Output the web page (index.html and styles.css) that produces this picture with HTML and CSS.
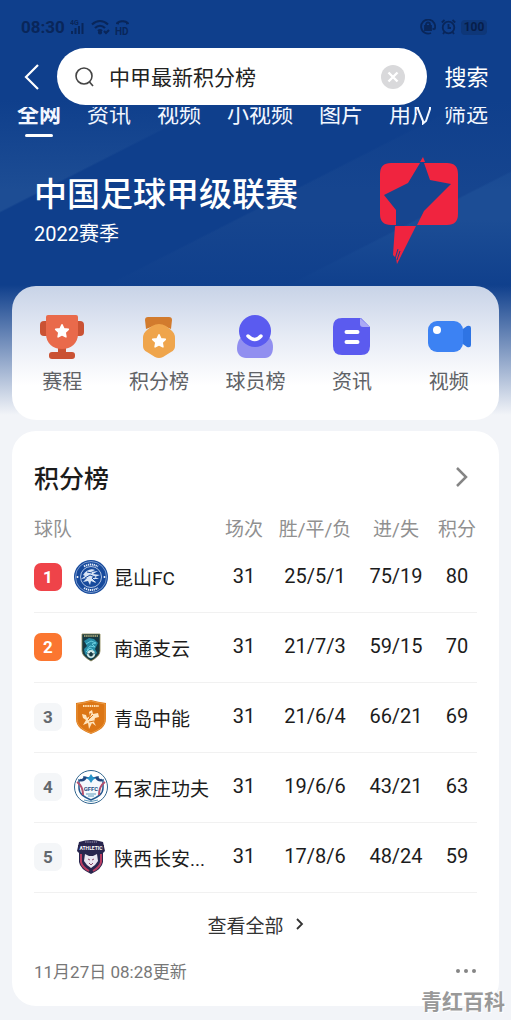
FILE: index.html
```html
<!DOCTYPE html>
<html lang="zh-CN">
<head>
    <meta charset="UTF-8">
    <meta name="viewport" content="width=device-width, initial-scale=1.0">
    <title>中甲最新积分榜</title>
    <link rel="stylesheet" href="styles.css">
</head>
<body>
    <svg class="defs" aria-hidden="true">
        <symbol id="star" viewBox="0 0 16 16">
            <path d="M8 1.800l1.900 4 4.400.6-3.200 3 .8 4.400L8 11.700l-3.900 2.100.8-4.400-3.200-3 4.400-.6z" fill="#fff" stroke="#fff" stroke-width="1.600" stroke-linejoin="round"/>
        </symbol>
    </svg>
    <div class="page">
        <header>
            <div class="status">
                <span class="time">08:30</span>
                <svg width="16" height="16" viewBox="0 0 16 16" fill="currentColor">
                    <text x="0" y="6" font-size="7" font-weight="700">4G</text>
                    <path d="M1 12h2v3H1zM4.500 9h2v6h-2zM8 7h2v8H8zM11.500 4h2v11h-2z"/>
                </svg>
                <svg width="19" height="16" viewBox="0 0 19 16" fill="none" stroke="currentColor" stroke-width="2.200">
                    <path d="M1 5.500C6 1 12 1 17 5.500M4 9c3-3 7-3 10 0M7 12c1.500-1.300 2.500-1.300 4 0"/>
                    <circle cx="9" cy="13.500" r="1"/>
                    <path d="M13 12l2 2 3-3"/>
                </svg>
                <svg width="16" height="17" viewBox="0 0 16 17" fill="currentColor">
                    <path d="M1 5c0-5 13-5 13 0l-3 .5V4C9 3 6 3 4 4v1.500z"/>
                    <text x="0" y="16" font-size="10" font-weight="700">HD</text>
                </svg>
                <div class="status-right">
                    <svg width="16" height="16" viewBox="0 0 16 16" fill="none" stroke="currentColor" stroke-width="1.800">
                        <path d="M11 14a7 7 0 1 1 3.500-3.500M14.500 10.500l-2-1"/>
                        <path d="M5 7h6v4H5z" fill="currentColor"/>
                        <path d="M6 7V5.500a2 2 0 0 1 4 0V7"/>
                    </svg>
                    <svg width="15" height="16" viewBox="0 0 15 16" fill="none" stroke="currentColor" stroke-width="1.800">
                        <circle cx="7.500" cy="8.500" r="5.800"/>
                        <path d="M7.500 5v4H10M.8 3.500L3.500 1M14.200 3.500L11.500 1M3.500 13L2 15M11.500 13l1.500 2"/>
                    </svg>
                    <span class="battery">100</span>
                </div>
            </div>
            <form class="search" onsubmit="return false">
                <button type="button" class="back" aria-label="返回">
                    <svg width="16" height="28" viewBox="0 0 16 28" fill="none" stroke="#fff" stroke-width="2.200"><path d="M14 2L2 14l12 12"/></svg>
                </button>
                <div class="search-box">
                    <svg width="20" height="22" viewBox="0 0 20 22" fill="none" stroke="#444" stroke-width="1.600"><circle cx="9" cy="10" r="8"/><path d="M14.500 16l3.500 4"/></svg>
                    <input type="text" aria-label="搜索内容" value="中甲最新积分榜">
                    <button type="reset" class="clear" aria-label="清除">
                        <svg width="24" height="24" viewBox="0 0 24 24"><circle cx="12" cy="12" r="12" fill="#d9d9db"/><path d="M7.500 7.500l9 9M16.500 7.500l-9 9" stroke="#fff" stroke-width="2.400"/></svg>
                    </button>
                </div>
                <button type="submit" class="submit">搜索</button>
            </form>
        </header>

        <nav class="tabs">
            <div class="tab-list">
                <a href="#" class="active">全网</a>
                <a href="#">资讯</a>
                <a href="#">视频</a>
                <a href="#">小视频</a>
                <a href="#">图片</a>
                <a href="#">用户</a>
            </div>
            <a href="#" class="filter">
                <svg width="14" height="22" viewBox="0 0 14 22" fill="none" stroke="#f2f7ff" stroke-width="2"><path d="M1 2h12v4L9 18l-3 2.500V18L1 6z"/></svg>
                筛选
            </a>
        </nav>

        <section class="hero">
            <div>
                <h1>中国足球甲级联赛</h1>
                <p>2022赛季</p>
            </div>
            <svg width="80" height="108" viewBox="0 0 80 108" fill="#f0243f">
                <path fill-rule="evenodd" d="M12 6H68Q79 6 79 17V57Q79 68 68 68H12Q1 68 1 57V17Q1 6 12 6ZM41 6L29 26L5 38L17 53L17 68H38L45 54L72 27L51 23L45 6Z"/>
                <path d="M41 5L44 0L46 5Z"/>
                <path d="M16 69H37L18 107L17 101L14 98Z"/>
                <path d="M19 92L16 102M21 94L18 103" stroke="#17468f" stroke-width="1"/>
            </svg>
        </section>

        <nav class="card shortcuts">
            <a href="#">
                <svg width="44" height="44" viewBox="0 0 44 44">
                    <rect x="0" y="6" width="14" height="15" rx="4" fill="#ca5234"/>
                    <rect x="30" y="6" width="14" height="15" rx="4" fill="#ca5234"/>
                    <path d="M18 31h8v8h-8z" fill="#ca5234"/>
                    <path d="M6 2q0-2 2-2h28q2 0 2 2v17c0 9-7 15-16 15S6 28 6 19z" fill="#e96a4b"/>
                    <rect x="9" y="37" width="26" height="7" rx="3" fill="#ca5234"/>
                    <use href="#star" x="14" y="8" width="16" height="16"/>
                </svg>
                赛程
            </a>
            <a href="#">
                <svg width="44" height="44" viewBox="0 0 44 44">
                    <path d="M8 5q0-3 3-3h21q3 0 3 3l-1 9q-12-7-25 0z" fill="#d27b2d"/>
                    <path d="M15 11q7-4 14 0l5 4q4 3 4 8v8q0 4-4 6l-8 5q-4 2-8 0l-8-5q-4-2-4-6v-8q0-5 4-8z" fill="#efa54c"/>
                    <use href="#star" x="14" y="18" width="16" height="16"/>
                </svg>
                积分榜
            </a>
            <a href="#">
                <svg width="44" height="44" viewBox="0 0 44 44">
                    <path d="M10 21h24c4 2 6 6 6 11 0 7-3 11-8 11H13c-5 0-9-4-9-9 0-6 2-11 6-13z" fill="#918ff0"/>
                    <circle cx="22" cy="16" r="16" fill="#5a5bf0"/>
                    <path d="M15 21q7 7 13 0" fill="none" stroke="#fff" stroke-width="3.500" stroke-linecap="round"/>
                </svg>
                球员榜
            </a>
            <a href="#">
                <svg width="44" height="44" viewBox="0 0 44 44">
                    <path d="M12 3h19l9 9v19q0 9-9 9H12q-9 0-9-9V12q0-9 9-9z" fill="#5b5bef"/>
                    <path d="M30 3l10 9h-7q-3 0-3-3z" fill="#aaa9f5"/>
                    <path d="M16.500 17h11M16.500 27h11" stroke="#fff" stroke-width="4" stroke-linecap="round"/>
                </svg>
                资讯
            </a>
            <a href="#">
                <svg width="44" height="44" viewBox="0 0 44 44">
                    <path d="M33 16l7-5q4-1 4 2v17q0 3-4 2l-7-5z" fill="#2e74e4"/>
                    <rect x="1" y="6" width="35" height="31" rx="9" fill="#3c82f3"/>
                    <circle cx="10" cy="15" r="4" fill="#fff"/>
                </svg>
                视频
            </a>
        </nav>

        <section class="card standings">
            <a href="#" class="card-title">
                <h2>积分榜</h2>
                <svg width="14" height="22" viewBox="0 0 14 22" fill="none" stroke="#858585" stroke-width="2.500"><path d="M2 2l9 9-9 9"/></svg>
            </a>
            <table>
                <thead>
                    <tr>
                        <th class="team-col">球队</th>
                        <th class="played">场次</th>
                        <th class="record">胜/平/负</th>
                        <th class="goals">进/失</th>
                        <th class="points">积分</th>
                    </tr>
                </thead>
                <tbody>
                    <tr>
                        <td>
                            <div class="team">
                                <span class="rank first">1</span>
                                <svg width="34" height="34" viewBox="0 0 34 34">
                                    <circle cx="17" cy="17" r="17" fill="#174a9c"/>
                                    <circle cx="17" cy="17" r="15.500" fill="none" stroke="#b9cdec" stroke-width=".6"/>
                                    <circle cx="17" cy="17" r="10.500" fill="#174a9c" stroke="#d5e1f3" stroke-width=".8"/>
                                    <path d="M10 6.500q7-4 14 0M10 28q7 4 14 0" fill="none" stroke="#e5eefb" stroke-width="2" stroke-dasharray="1.300 .7"/>
                                    <path d="M9 15c3-5 8-7 12-5l-4 2 7-1-5 3 7 1-5 2 4 2-5 0 2 4-5-2-1 4-2-4-5 1 4-4-6 1 4-3z" fill="#d9e5f5"/>
                                    <path d="M11 18l5-3 5 2-3 1 3 3M13 12l5 1" fill="none" stroke="#174a9c"/>
                                    <circle cx="3.500" cy="17" r="1" fill="#fff"/>
                                    <circle cx="30.500" cy="17" r="1" fill="#fff"/>
                                </svg>
                                昆山FC
                            </div>
                        </td>
                        <td>31</td>
                        <td>25/5/1</td>
                        <td>75/19</td>
                        <td>80</td>
                    </tr>
                    <tr>
                        <td>
                            <div class="team">
                                <span class="rank second">2</span>
                                <svg width="34" height="34" viewBox="0 0 34 34">
                                    <path d="M8 4h18v17q0 5-9 10-9-5-9-10z" fill="#173943" stroke="#8b8554" stroke-width=".8"/>
                                    <path d="M10 6h14" stroke="#c0b77e" stroke-width="1.500" stroke-dasharray="1.500 .6"/>
                                    <path d="M10 11l5-3 5 1 4 4-3 6 2 4-6 6-6-5-1-5 3-3z" fill="#278ca5"/>
                                    <path d="M12 14l5-3 5 2-4 1 3 3-5-1-3 4M12 22l4-4 3 2" fill="none" stroke="#69cede"/>
                                    <circle cx="17" cy="24" r="4" fill="#cde8e7"/>
                                    <path d="M17 22l2 2-1 2h-2l-1-2zM13 23l2 1M21 23l-2 1" fill="#173943" stroke="#173943" stroke-width=".6"/>
                                </svg>
                                南通支云
                            </div>
                        </td>
                        <td>31</td>
                        <td>21/7/3</td>
                        <td>59/15</td>
                        <td>70</td>
                    </tr>
                    <tr>
                        <td>
                            <div class="team">
                                <span class="rank">3</span>
                                <svg width="34" height="34" viewBox="0 0 34 34">
                                    <path d="M2 3q8-1 15-3 7 2 15 3v16c0 8-7 12-15 15C9 31 2 27 2 19z" fill="#dc7615"/>
                                    <path d="M3 4q7-1 14-3 7 2 14 3v15c0 7-6 11-14 14C9 30 3 26 3 19z" fill="none" stroke="#f0a752" stroke-width=".7"/>
                                    <path d="M9 6h16" stroke="#ffe1b5" stroke-width="2" stroke-dasharray="1.500 .7"/>
                                    <path d="M15 12l3-2 1 4 5-1 1 4-4 1-1 4 2 4-4-3-3 6-1-6-5 2 3-5-3-2-1-4 4 1 1 3 3-2z" fill="#ffe4bd"/>
                                    <path d="M14 20l5-5M15 22l5-1M17 13l-2 6" stroke="#dc7615"/>
                                </svg>
                                青岛中能
                            </div>
                        </td>
                        <td>31</td>
                        <td>21/6/4</td>
                        <td>66/21</td>
                        <td>69</td>
                    </tr>
                    <tr>
                        <td>
                            <div class="team">
                                <span class="rank">4</span>
                                <svg width="34" height="34" viewBox="0 0 34 34">
                                    <circle cx="17" cy="17" r="16.500" fill="#fff" stroke="#31658e"/>
                                    <path d="M5 10q5 1 5-3 7 2 14 0 0 4 5 3v8c0 6-5 9-12 12-7-3-12-6-12-12z" fill="#f5f9fd" stroke="#24588f" stroke-width="1.500"/>
                                    <path d="M3 12q6 4 6 13M31 12q-6 4-6 13" fill="none" stroke="#b4506e" stroke-width="2"/>
                                    <path d="M6 10q4 1 6-3M28 10q-4 1-6-3" fill="none" stroke="#22467f" stroke-width="2.500"/>
                                    <path d="M17 4l2 3 3 1-3 2-2 3-2-3-3-2 3-1z" fill="#2794c9"/>
                                    <text x="17" y="21" text-anchor="middle" font-size="6" font-weight="700" fill="#244e84">GFFC</text>
                                    <path d="M12 24h10M14 26h6M10 30q7 3 14 0" fill="none" stroke="#5f9abd"/>
                                </svg>
                                石家庄功夫
                            </div>
                        </td>
                        <td>31</td>
                        <td>19/6/6</td>
                        <td>43/21</td>
                        <td>63</td>
                    </tr>
                    <tr>
                        <td>
                            <div class="team">
                                <span class="rank">5</span>
                                <svg width="34" height="34" viewBox="0 0 34 34">
                                    <path d="M5 2q12-4 24 0l2 9-2 2v9q-1 7-12 12Q6 29 5 22v-9l-2-2z" fill="#29264e"/>
                                    <path d="M7 14v8q1 5 8 9M27 14v8q-1 5-8 9" fill="none" stroke="#b83d61" stroke-width="2"/>
                                    <path d="M4 5h26v5H4z" fill="#29264e"/>
                                    <path d="M11 2h12" stroke="#a09bb7" stroke-dasharray="1.500 .7"/>
                                    <text x="17" y="10" text-anchor="middle" font-size="5" font-weight="700" fill="#fff">ATHLETIC</text>
                                    <path d="M11 14l4 2h4l4-2 1 7-3 4-4 3-4-3-3-4z" fill="#eae7f1"/>
                                    <path d="M14 19l2 1M20 19l-2 1M15 23l2 2 2-2" fill="none" stroke="#8c4968"/>
                                </svg>
                                陕西长安...
                            </div>
                        </td>
                        <td>31</td>
                        <td>17/8/6</td>
                        <td>48/24</td>
                        <td>59</td>
                    </tr>
                </tbody>
            </table>
            <a href="#" class="more">
                查看全部
                <svg width="8" height="12" viewBox="0 0 8 12" fill="none" stroke="#333" stroke-width="1.800"><path d="M1 1l5 5-5 5"/></svg>
            </a>
            <div class="card-foot">
                <span>11月27日 08:28更新</span>
                <button type="button" aria-label="更多">
                    <svg width="22" height="6" viewBox="0 0 22 6" fill="#858585"><circle cx="3" cy="3" r="2"/><circle cx="11" cy="3" r="2"/><circle cx="19" cy="3" r="2"/></svg>
                </button>
            </div>
        </section>
        <div class="watermark">青红百科</div>
    </div>
</body>
</html>
```
FILE: styles.css
```css
* {
    box-sizing: border-box;
}
body {
    margin: 0;
    background-color: #f2f4f8;
    font-family: Roboto, "Noto Sans CJK SC", sans-serif;
    color: #1c1c1c;
}
a {
    color: inherit;
    text-decoration: none;
}
button {
    padding: 0;
    border: none;
    background: none;
    font-family: inherit;
    cursor: pointer;
}
svg {
    flex-shrink: 0;
}
h1, h2, p {
    margin: 0;
}
.defs {
    position: absolute;
    width: 0;
    height: 0;
}
/* blue stripes on top, fading into the grey page */
.page {
    position: relative;
    padding-bottom: 14px;
    background-image:
        linear-gradient(#0f3f8c 100px, rgba(15, 63, 140, 0) 190px),
        linear-gradient(rgba(242, 244, 248, 0) 285px, #f2f4f8 415px),
        linear-gradient(rgba(15, 63, 140, 0) 220px, #0f3f8c 290px),
        linear-gradient(153deg, #1d4d94 188px, #0f3f8c 190px, #0f3f8c 302px, #16458f 304px, #16458f 384px, #1c4d95 386px);
    background-size: 100% 420px;
    background-repeat: no-repeat;
}

/* status bar + search */
.status {
    display: flex;
    align-items: center;
    gap: 5px;
    height: 48px;
    padding: 6px 24px 0 21px;
    color: #09265a;
}
.time {
    font-size: 17px;
    font-weight: 700;
}
.status-right {
    display: flex;
    align-items: center;
    gap: 5px;
    margin-left: auto;
}
.battery {
    width: 26px;
    border-radius: 4px;
    background-color: #0e3779;
    font-size: 12px;
    line-height: 15px;
    font-weight: 700;
    text-align: center;
    color: #071e4a;
}
.search {
    display: flex;
    height: 57px;
}
.back {
    width: 57px;
}
.back svg, .clear svg, .card-foot svg {
    display: block;
}
.back svg {
    margin-left: 24px;
}
.search-box {
    display: flex;
    flex: 1;
    align-items: center;
    min-width: 0;
    padding: 0 22px 0 18px;
    border-radius: 29px;
    background-color: #fff;
}
.search-box input {
    flex: 1;
    min-width: 0;
    margin-left: 14px;
    padding: 0 0 2px;
    border: none;
    outline: none;
    font-family: inherit;
    font-size: 21px;
    color: #222;
}
.submit {
    width: 84px;
    padding: 0 5px 3px 0;
    font-size: 22px;
    color: #fff;
}

/* tabs, partly scrolled under the search box */
.tabs {
    display: flex;
    height: 38px;
    margin-top: 2px;
    padding: 0 23px 0 17px;
    overflow: hidden;
    color: #f2f7ff;
    font-size: 22px;
    line-height: 24px;
}
.tab-list {
    display: flex;
    flex: 1;
    gap: 26px;
    min-width: 0;
    margin-top: -4px;
    overflow: hidden;
    white-space: nowrap;
}
.tab-list a {
    flex-shrink: 0;
}
.tab-list .active {
    font-weight: 700;
}
.tab-list .active::after {
    content: "";
    display: block;
    width: 28px;
    height: 3px;
    margin: 7px auto 0;
    border-radius: 2px;
    background-color: #fff;
}
.filter {
    display: flex;
    gap: 13px;
    margin-top: -4px;
}

.hero {
    display: flex;
    justify-content: space-between;
    height: 141px;
    padding: 12px 52px 0 34px;
    color: #fff;
}
.hero h1 {
    margin-top: 18px;
    font-size: 33px;
    line-height: 40px;
    font-weight: 500;
}
.hero p {
    margin-top: 5px;
    font-size: 20px;
    line-height: 28px;
}

.card {
    margin: 0 12px;
    border-radius: 24px;
    background-color: #fff;
}
.shortcuts {
    display: flex;
    padding: 29px 2px 25px;
    background-image: linear-gradient(#c8d3e7, #e6ebf5 50px, #fff 100px);
}
.shortcuts a {
    display: flex;
    flex: 1;
    flex-direction: column;
    align-items: center;
    gap: 11px;
    font-size: 20px;
    line-height: 25px;
    color: #606266;
}

/* standings */
.standings {
    margin-top: 11px;
    padding: 30px 22px 20px;
}
.card-title {
    display: flex;
    align-items: center;
    justify-content: space-between;
    height: 32px;
    padding-right: 8px;
}
.card-title h2 {
    font-size: 25px;
    font-weight: 500;
}
table {
    width: 100%;
    margin-top: 19px;
    border-collapse: collapse;
    table-layout: fixed;
}
th {
    height: 30px;
    padding: 0;
    font-size: 19px;
    font-weight: 400;
    color: #909090;
    white-space: nowrap;
}
.team-col {
    text-align: left;
}
.played {
    width: 62px;
}
.record {
    width: 80px;
}
.goals {
    width: 82px;
}
.points {
    width: 40px;
}
td {
    height: 70px;
    padding: 0 0 2px;
    border-bottom: 1px solid #f1f1f1;
    font-size: 20px;
    text-align: center;
}
td:first-child {
    padding: 0;
    font-size: 19px;
}
.team {
    display: flex;
    align-items: center;
    gap: 6px;
    white-space: nowrap;
}
.rank {
    flex-shrink: 0;
    width: 28px;
    margin-right: 6px;
    border-radius: 7px;
    background-color: #f4f6f8;
    font-size: 17px;
    line-height: 28px;
    font-weight: 700;
    color: #63686e;
}
.rank.first {
    background-color: #ef4349;
    color: #fff;
}
.rank.second {
    background-color: #fb7630;
    color: #fff;
}
.more {
    display: flex;
    align-items: center;
    justify-content: center;
    gap: 12px;
    height: 63px;
    font-size: 19px;
    color: #333;
}
.card-foot {
    display: flex;
    align-items: center;
    justify-content: space-between;
    height: 30px;
    font-size: 17px;
    color: #777;
}
.watermark {
    position: absolute;
    right: 6px;
    bottom: 4px;
    font-size: 21px;
    line-height: 28px;
    font-weight: 700;
    color: #999;
    text-shadow: 1px 1px #fff, -1px -1px #fff;
}
```
